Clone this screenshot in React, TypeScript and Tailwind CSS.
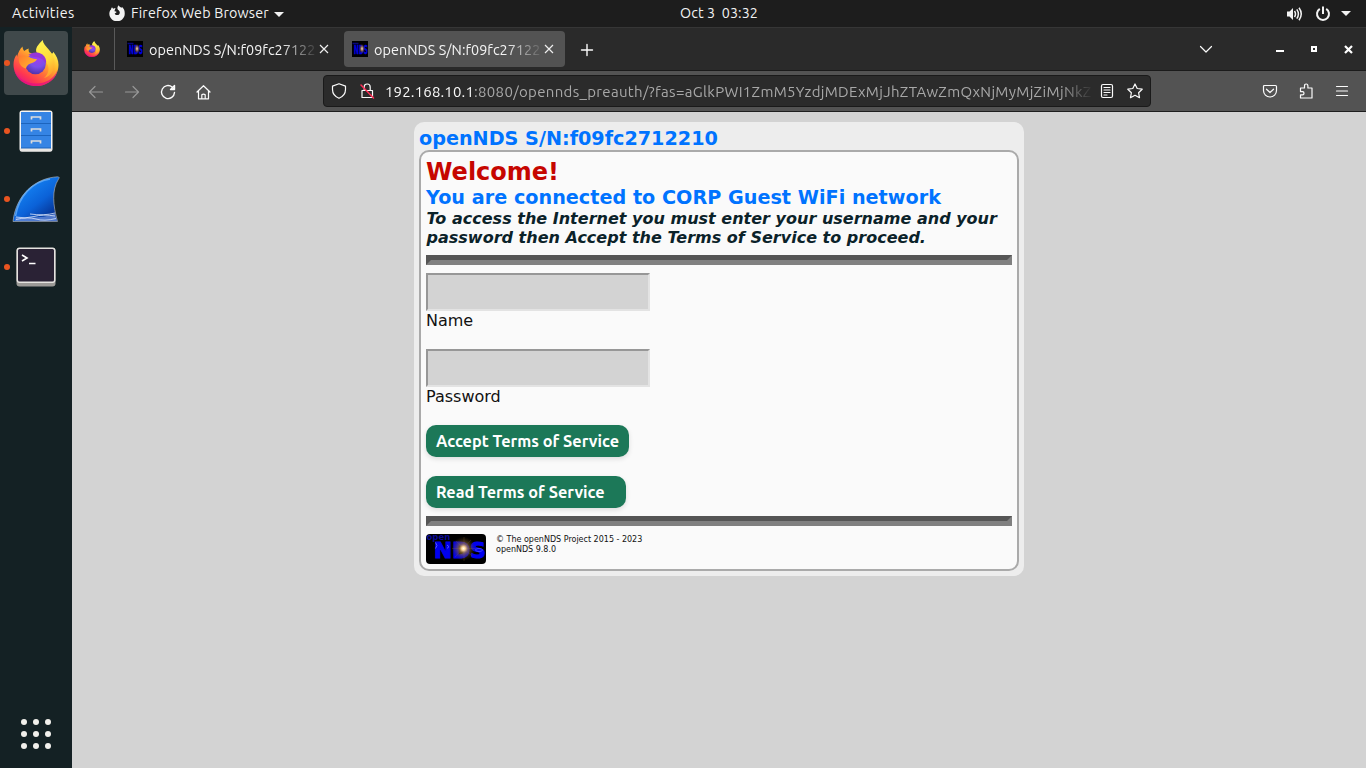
import React from "react";

const UI = "font-['Ubuntu','Noto_Sans',sans-serif]";

function FirefoxLogo({ size, id }: { size: number; id: string }) {
  return (
    <svg width={size} height={size} viewBox="0 0 46 46" className="block shrink-0">
      <defs>
        <linearGradient id={id + "a"} x1="0.85" y1="0.1" x2="0.2" y2="0.95">
          <stop offset="0" stopColor="#fff44f" />
          <stop offset="0.3" stopColor="#ffb62b" />
          <stop offset="0.55" stopColor="#ff7139" />
          <stop offset="0.8" stopColor="#ff3750" />
          <stop offset="1" stopColor="#e31587" />
        </linearGradient>
        <radialGradient id={id + "b"} cx="0.6" cy="0.25" r="0.8">
          <stop offset="0" stopColor="#a23bf0" />
          <stop offset="0.5" stopColor="#7a4fe8" />
          <stop offset="1" stopColor="#4b2fa5" />
        </radialGradient>
        <linearGradient id={id + "c"} x1="0.4" y1="0" x2="0.7" y2="1">
          <stop offset="0" stopColor="#fff44f" />
          <stop offset="0.55" stopColor="#ffd83b" />
          <stop offset="1" stopColor="#ff9a2b" />
        </linearGradient>
        <linearGradient id={id + "d"} x1="0" y1="0" x2="1" y2="0.6">
          <stop offset="0" stopColor="#ff7a2e" />
          <stop offset="1" stopColor="#ffb72d" />
        </linearGradient>
      </defs>
      <path d="M9.5 6.5c.2 2 .7 3.300 1.700 4.500 1.400-1.200 3-2.100 4.500-2.500-.3 1.500 0 2.900.6 4.100L23 15l7-9c2 2.500 5 5.500 8 8 1.500-.2 2-1 2.300-2.300 3 3.600 5.200 8.300 5.200 13C45.500 37 35.500 46 23 46S.5 36.500.5 24.500c0-4 1.200-7.200 3-10l.6 2.200C5 12.500 7 9 9.500 6.500z" fill={`url(#${id}a)`} />
      <path d="M29.700 0c.3 3.500 3 5.800 6 9.500 4.500 5 7 10 5.300 18-1.500 6.500-6 9.500-10 10.500 4-3.500 5.500-8 4-12.500-2-5.500-7-7-11-12.300C21 8.500 26 4 29.700 0z" fill={`url(#${id}c)`} />
      <circle cx="22.500" cy="24" r="10.300" fill={`url(#${id}b)`} />
      <path d="M15.500 14.800c3-2.800 10-3.500 14-.3 3 2.300 4.200 6 3.500 9.500-1.500-3.800-5-6.500-9.500-6.800-3-.2-5.500-1-8-2.400z" fill="#9536d9" />
      <path d="M6 17.500c4-3 8-2.200 11.500.2 2 1 4.500 1.200 6.500 1.300-.7 2.500-3.500 3.500-6.500 4.600-2.500 1-4 2.400-4.500 5C8 27.500 5 22.500 6 17.500z" fill={`url(#${id}d)`} />
      <path d="M1.300 30C5 39 13.500 43.500 23 43.500S41 39 44.500 30C43 40 33.500 46 23 46S3.500 40 1.300 30z" fill="#e5107f" opacity="0.75" />
    </svg>
  );
}

function NdsLogo({ id }: { id: string }) {
  return (
    <svg width="60" height="30" viewBox="0 0 60 30" className="block shrink-0">
      <defs>
        <radialGradient id={id}>
          <stop offset="0" stopColor="#fffdf0" />
          <stop offset="0.15" stopColor="#ffd9a0" />
          <stop offset="0.38" stopColor="#a07840" stopOpacity="0.7" />
          <stop offset="1" stopColor="#503510" stopOpacity="0" />
        </radialGradient>
      </defs>
      <rect width="60" height="30" fill="#000" />
      <text x="0.500" y="6" fontSize="8.500" fill="#0a0a96" fontWeight="700" fontFamily="DejaVu Sans">open</text>
      <text x="8" y="23.700" fontSize="22" textLength="52" lengthAdjust="spacingAndGlyphs" fill="#0000f0" stroke="#0000f0" strokeWidth="1" fontWeight="700" fontFamily="DejaVu Sans">NDS</text>
      <path d="M30 7L46 22M45 6L29 23M38 3v24M26 14.500h24" stroke="#b98a45" strokeWidth="0.400" opacity="0.500" />
      <circle cx="37.500" cy="14.500" r="12" fill={`url(#${id})`} />
      <path d="M9.500 8.500q3 3 0 6M21 11l2 1.700-2 1.700" fill="none" stroke="#5555ff" strokeWidth="1" />
      <ellipse cx="53" cy="16" rx="3.500" ry="1.500" fill="none" stroke="#5050ff" strokeWidth="0.800" />
    </svg>
  );
}

function Favicon({ id }: { id: string }) {
  return (
    <svg width="16" height="16" viewBox="0 0 16 16" className="block shrink-0">
      <defs>
        <radialGradient id={id}>
          <stop offset="0" stopColor="#fff0d0" />
          <stop offset="0.4" stopColor="#b08048" stopOpacity="0.8" />
          <stop offset="1" stopColor="#402808" stopOpacity="0" />
        </radialGradient>
      </defs>
      <rect width="16" height="16" fill="#000" />
      <path d="M.5 2.500h6" stroke="#07077c" strokeWidth="1.500" />
      <text x="2" y="12.600" fontSize="11.500" textLength="14" lengthAdjust="spacingAndGlyphs" fill="#0000e0" stroke="#0000e0" strokeWidth="0.400" fontWeight="700" fontFamily="DejaVu Sans">NDS</text>
      <ellipse cx="10" cy="7.700" rx="3" ry="5" fill={`url(#${id})`} />
    </svg>
  );
}

function Tab({ active }: { active?: boolean }) {
  return (
    <div className={`flex h-9 w-[221px] items-center rounded pl-2 ${active ? "bg-[#535353]" : ""}`}>
      <Favicon id={active ? "g1" : "g2"} />
      <div className="ml-1.5 h-6 w-[168px] overflow-hidden pt-px text-[14.400px] leading-6 tracking-[0.050px] whitespace-nowrap text-[#f4f4f4] [mask-image:linear-gradient(to_right,black_132px,transparent_170px)]">
        openNDS S/N:f09fc2712210
      </div>
      <svg width="16" height="16" viewBox="0 0 16 16" className="-ml-px" stroke="#eee" strokeWidth="1.200" fill="none">
        <path d="M4 4l8 8M12 4l-8 8" />
      </svg>
    </div>
  );
}

function Line({ children, className = "", size = 16 }: { children: React.ReactNode; className?: string; size?: number }) {
  return (
    <svg width={size} height={size} viewBox="0 0 16 16" fill="none" stroke="#fbfbfb" strokeWidth="1.200" strokeLinecap="round" strokeLinejoin="round" className={`block shrink-0 ${className}`}>
      {children}
    </svg>
  );
}

function DockItem({ children, active }: { children: React.ReactNode; active?: boolean }) {
  return (
    <div className={`relative ml-1 flex h-16 w-16 items-center justify-center rounded ${active ? "bg-[#40494b]" : ""}`}>
      <span className="absolute top-[29px] left-0 h-1.5 w-1.5 rounded-full bg-[#e95420]" />
      {children}
    </div>
  );
}

const Rule = () => (
  <div className="my-2 h-2.5 border-[5px] border-t-[#555] border-r-[#808080] border-b-[#808080] border-l-[#555]" />
);

const Field = ({ label }: { label: string }) => (
  <label className="mb-[19px] block">
    <input className="block h-[38px] w-56 border-2 border-t-[#979797] border-r-[#e3e3e3] border-b-[#e3e3e3] border-l-[#979797] bg-[#d3d3d3] px-2 outline-none" />
    <span className="block leading-[19px]">{label}</span>
  </label>
);

export default function App() {
  return (
    <div className={`flex h-[768px] w-[1366px] flex-col overflow-hidden bg-[#d3d3d3] ${UI}`}>
      <header className="grid h-[27px] shrink-0 grid-cols-[1fr_auto_1fr] items-center bg-[#1d1d1d] text-[14.300px] text-[#f2f2f2]">
        <div className="flex items-center pt-px whitespace-nowrap">
          <span className="ml-3 w-[97px] tracking-[0.400px]">Activities</span>
          <svg width="16" height="16" viewBox="0 0 16 16" className="-mt-0.5 mr-1.5">
            <path fillRule="evenodd" fill="#f2f2f2" d="M3 2.200l1.200 1.600C5 3.200 5.700 3 6.500 3L5.400 6.200c.8 0 1.800.2 2.300.7-.6.8-1.600 1-2 1.700.7 1.900 3.600 2 4.700.3.900-1.500.2-3.400-1.500-4.200C8 3.500 8.300 1.600 9.600.2c.4 1.400 1.800 1.700 2.900 2.600l.6-.8c1.600 1.400 2.600 3.500 2.600 5.800A7.700 7.700 0 1 1 1.600 4.400l.2.800C2 4 2.400 3 3 2.200z" />
          </svg>
          <span className="tracking-[0.180px]">Firefox Web Browser</span>
          <svg width="10" height="5" className="ml-[5px]"><path d="M0 0h10L5 5z" fill="#f2f2f2" /></svg>
        </div>
        <div className="pl-[72px] tracking-[0.080px] whitespace-pre">Oct 3  03:32</div>
        <div className="flex items-center justify-end gap-[11px] pr-[15px]">
          <svg width="17" height="16" viewBox="0 0 17 16" fill="none" stroke="#f2f2f2" strokeWidth="1.500" className="mr-px">
            <path d="M1 5.500h2.500L7 2v12L3.500 10.500H1z" fill="#f2f2f2" stroke="none" />
            <path d="M8.500 5q2 3 0 6M10.800 3.300q3.200 4.700 0 9.400M13 1.800q4.500 6.200 0 12.400" />
          </svg>
          <svg width="16" height="16" viewBox="0 0 16 16" fill="none" stroke="#f2f2f2" strokeWidth="2" className="-mr-px">
            <path d="M8 .5v7.500M4.800 2.800a6 6 0 1 0 6.400 0" />
          </svg>
          <svg width="10" height="5"><path d="M0 0h10L5 5z" fill="#f2f2f2" /></svg>
        </div>
      </header>

      <div className="flex min-h-0 flex-1">
        <aside className="flex w-[72px] shrink-0 flex-col gap-1 bg-[#142124] pt-1">
          <DockItem active><FirefoxLogo size={46} id="big" /></DockItem>
          <DockItem>
            <svg width="34" height="42" viewBox="0 0 34 42">
              <rect x="0.500" y="0.500" width="33" height="41" rx="2.500" fill="#f6f5f3" />
              <path d="M1 38h32v2q0 1.500-2 1.500H3q-2 0-2-1.500z" fill="#e9e7e4" />
              <path d="M2 2h30v36H2z" fill="#3584e4" />
              <path d="M2 13.500h30M2 25.500h30M2 38h30" stroke="#1c64bd" />
              <path d="M12.500 9.500v-2.500h9v2.500M12.500 21.500v-2.500h9v2.500M12.500 33.500v-2.500h9v2.500" fill="none" stroke="#dcdcdc" strokeWidth="1.700" />
            </svg>
          </DockItem>
          <DockItem>
            <svg width="48" height="46" viewBox="0 0 48 46">
              <defs>
                <linearGradient id="fin" x1="0.300" y1="0.100" x2="0.900" y2="0.850">
                  <stop offset="0" stopColor="#1585f5" /><stop offset="0.550" stopColor="#0b62d8" /><stop offset="1" stopColor="#06308f" />
                </linearGradient>
              </defs>
              <path d="M1 45.500C4 19 23 2 45.500.8c2 0 2 1 1 2.300-7 11-5.500 26-1 42.400z" fill="url(#fin)" stroke="#a8aaae" strokeWidth="0.700" />
              <path d="M3.500 40C7 20 20 6 38 3" fill="none" stroke="#72b7fb" strokeWidth="1.500" opacity="0.700" />
              <path d="M3 45l.5-4c6 1.500 10 .5 17 .5s15-1 22.500-4l2 7.500z" fill="#6389d8" opacity="0.800" />
              <path d="M4 41q9 2 18-.5t21-.5M4 43.500q12-3 20-.5t20-.5M18 38q14 2 25-1" stroke="#d9e5fa" strokeWidth="0.800" fill="none" />
            </svg>
          </DockItem>
          <DockItem>
            <svg width="40" height="40" viewBox="0 0 40 40">
              <rect x="0.500" y="1" width="39" height="38.500" rx="3" fill="#9c9a97" />
              <rect x="0.500" y="0.500" width="39" height="35.500" rx="3" fill="#e5e3e0" />
              <rect x="2" y="2" width="36" height="32.500" rx="1.500" fill="#2a2235" />
              <path d="M6 8l5 3-5 3M13 16.500h6.500" fill="none" stroke="#fff" strokeWidth="1.600" />
            </svg>
          </DockItem>
          <div className="mt-auto mb-[19px] ml-[21px] grid w-[30px] grid-cols-3 gap-1.5">
            {[...Array(9)].map((_, i) => <span key={i} className="h-1.5 w-1.5 rounded-full bg-[#f2f0ec]" />)}
          </div>
        </aside>

        <div className="flex min-w-0 flex-1 flex-col">
          <div className="flex h-11 shrink-0 items-center border-t border-b border-t-[#363636] border-b-[#1b1b1b] bg-[#2a2a2a]">
            <div className="flex h-full w-[43px] items-center border-r border-[#5a5a5a] pl-3">
              <FirefoxLogo size={16} id="small" />
            </div>
            <div className="ml-1 flex gap-1">
              <Tab />
              <Tab active />
            </div>
            <Line className="mt-px ml-3.5 stroke-[1.400]"><path d="M2.500 8h11M8 2.500v11" /></Line>
            <div className="ml-auto flex items-center">
              <Line className="mr-[62px]"><path d="M2.500 5.500L8 11l5.500-5.500" /></Line>
              <svg width="8" height="8" className="mr-[27px]"><path d="M0 5h8v2H0z" fill="#fff" /></svg>
              <svg width="6" height="6" className="mr-[27px]"><path d="M1 1h4v4H1z" fill="none" stroke="#fff" strokeWidth="2" /></svg>
              <svg width="9" height="9" className="mr-[13px]"><path d="M1 1l7 7M8 1L1 8" stroke="#fff" strokeWidth="2.200" /></svg>
            </div>
          </div>

          <div className="flex h-[41px] shrink-0 items-center border-b border-[#1e1e1e] bg-[#535353]">
            <div className="mt-px ml-4 flex gap-5">
              <Line className="opacity-40"><path d="M14.500 8H1.500M7 2.500L1.500 8 7 13.500" /></Line>
              <Line className="opacity-40"><path d="M1.500 8h13M9 2.500L14.500 8 9 13.500" /></Line>
              <Line className="stroke-[1.400]"><path d="M14.500 8.500a6.500 6.500 0 1 1-2.200-5.300L14 5M14.500 1.500v4h-4z" /></Line>
              <Line><path d="M1 8l6.500-6.300L14 8M2.500 6.800v8h10v-8M5.800 14.800v-4q1.700-1.500 3.400 0v4" /></Line>
            </div>
            <div className="ml-[111px] flex h-8 w-[828px] items-center rounded border border-[#1a1a1a] bg-[#2b2b2b] px-[7px]">
              <Line><path d="M8 .7l6.500 2.400v3.500c0 4-2.300 7-6.500 8.700-4.200-1.700-6.500-4.700-6.500-8.700V3.100z" /></Line>
              <Line className="ml-3"><path d="M3 7.500h10.500v7H3zM5.200 7.500V4q0-3 3-3t3 3v3.500" /><path d="M2 2l12.500 13" stroke="#ff2d55" strokeWidth="1.500" /></Line>
              <div className="ml-[10px] w-[706px] overflow-hidden pt-0.5 text-[15px] leading-6 tracking-[0.330px] whitespace-nowrap text-[#a8a8a8] [mask-image:linear-gradient(to_right,black_675px,transparent_708px)]">
                <span className="tracking-[0.150px] text-[#fbfbfb]">192.168.10.1</span>:8080/opennds_preauth/?fas=aGlkPWI1ZmM5YzdjMDExMjJhZTAwZmQxNjMyMjZiMjNkZ
              </div>
              <Line className="ml-2"><rect x="2.500" y="1.500" width="11" height="13" rx="1.500" /><path d="M5 4.500h6M5 7h6M5 9.500h6M5 12h3" /></Line>
              <Line className="ml-3"><path d="M8 1l2.200 4.500 5 .7-3.600 3.500.9 5L8 12.300l-4.500 2.400.9-5L.8 6.200l5-.7z" /></Line>
            </div>
            <Line className="ml-[111px]"><path d="M2.500 2.500h11q1 0 1 1V7.500a6.500 6.500 0 0 1-13 0V3.500q0-1 1-1zM4.500 6.200L8 9.500l3.500-3.300" /></Line>
            <Line className="ml-5"><path d="M2.500 5h4V3q0-2 1.700-2T9.900 3v2H14v10H2.500v-3.200h2q1.500 0 1.500-1.600t-1.500-1.600h-2z" /></Line>
            <Line className="ml-5"><path d="M2.500 3.500h11M2.500 8h11M2.500 12.500h11" /></Line>
          </div>

          <main className="flex-1 pt-2.5 pl-[342px] font-['DejaVu_Sans',sans-serif] text-base text-[#111]">
            <div className="w-[610px] rounded-[10px] bg-[#ededed] p-[5px]">
              <h1 className="h-[23px] text-[19.200px] leading-[23px] font-bold text-[#0073ff]">openNDS S/N:f09fc2712210</h1>
              <section className="rounded-[10px] border-2 border-[#aaa] bg-[#fafafa] p-[5px]">
                <h2 className="h-[29px] pt-px text-2xl leading-[29px] font-bold text-[#c60600]">Welcome!</h2>
                <h3 className="h-[23px] text-[19.200px] leading-[23px] font-bold tracking-[0.015px] text-[#0073ff]">You are connected to CORP Guest WiFi network</h3>
                <p className="pl-[0.500px] leading-[19px] font-bold tracking-[0.010px] text-[#0b2229] italic">
                  To access the Internet you must enter your username and your<br />
                  password then Accept the Terms of Service to proceed.
                </p>
                <Rule />
                <Field label="Name" />
                <Field label="Password" />
                <div className={`flex flex-col items-start gap-[19px] font-bold text-white ${UI}`}>
                  <button className="h-8 w-[203px] rounded-[10px] bg-[#1c7858] px-2.5 text-left text-[16.250px] whitespace-nowrap shadow-[0_2px_5px_rgba(0,0,0,0.12)]">Accept Terms of Service</button>
                  <button className="h-8 w-[200px] rounded-[10px] bg-[#1c7858] px-2.5 text-left text-[16.250px] whitespace-nowrap shadow-[0_2px_5px_rgba(0,0,0,0.12)]">Read Terms of Service</button>
                </div>
                <Rule />
                <footer className="flex gap-2.5">
                  <div className="overflow-hidden rounded"><NdsLogo id="g3" /></div>
                  <p className="pt-px text-[8px] leading-[10px]">© The openNDS Project 2015 - 2023<br />openNDS 9.8.0</p>
                </footer>
              </section>
            </div>
          </main>
        </div>
      </div>
    </div>
  );
}
